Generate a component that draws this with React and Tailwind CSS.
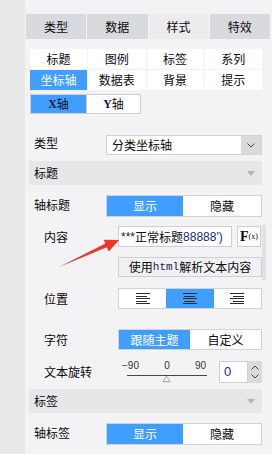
import React from "react";

const BLUE = "bg-[#409eff] text-white";

function AlignIcon({ type }) {
  const rows = [14, 11, 14, 11, 14];
  const ys = [0, 3, 5, 8, 10];
  return (
    <svg width="14" height="11" viewBox="0 0 14 11">
      {rows.map((w, i) => {
        const x = type === "left" ? 0 : type === "right" ? 14 - w : Math.floor((14 - w) / 2);
        return <rect key={i} x={x} y={ys[i]} width={w} height="1" fill="#2b2b2b" />;
      })}
    </svg>
  );
}

function SectionHeader({ title, className }) {
  return (
    <div className={`ml-[4px] mr-[10px] h-[24px] bg-[#e7e7e9] flex items-center justify-between pl-[5px] pr-[7px] ${className}`}>
      <span>{title}</span>
      <svg width="8" height="5" viewBox="0 0 8 5">
        <polygon points="0,0 8,0 4,5" fill="#b4b4b4" />
      </svg>
    </div>
  );
}

function ShowHide({ label, className }) {
  return (
    <div className={`flex items-start pl-[9px] mr-[10px] ${className}`}>
      <div className="w-[72px] pt-[3px] leading-[14px]">{label}</div>
      <div className="flex-1 h-[22px] flex border border-[#d3d3d3] bg-white">
        <div className={`w-[76px] flex items-center justify-center ${BLUE}`}>显示</div>
        <div className="flex-1 flex items-center justify-center">隐藏</div>
      </div>
    </div>
  );
}

export default function App() {
  const tabs = ["类型", "数据", "样式", "特效"];
  const subTabs = ["标题", "图例", "标签", "系列", "坐标轴", "数据表", "背景", "提示"];

  return (
    <div className="flex w-[272px] h-[454px] overflow-hidden text-[12px] text-[#0a0a0a] font-['Noto_Sans_CJK_SC',sans-serif]">
      <div className="w-[26px] bg-[#e8e8e8]" />
      <div className="flex-1 bg-[#f3f3f5] relative">
        {/* top tabs */}
        <div className="mt-[14px] ml-px mr-[2px] h-[25px] grid grid-cols-4 gap-px bg-[#f6f6f8]">
          {tabs.map((t) => (
            <div
              key={t}
              className={`flex items-center justify-center ${t === "样式" ? "bg-[#ececef]" : "bg-[#d9dadd]"}`}
            >
              {t}
            </div>
          ))}
        </div>

        {/* sub tabs */}
        <div className="mt-[10px] ml-[5px] mr-[10px] grid grid-cols-4 gap-px">
          {subTabs.map((t) => (
            <div
              key={t}
              className={`h-[20px] flex items-center justify-center ${t === "坐标轴" ? BLUE : "bg-white"}`}
            >
              {t}
            </div>
          ))}
        </div>

        {/* X / Y axis */}
        <div className="mt-[4px] ml-[5px] w-[111px] h-[20px] flex border border-[#cfcfd2] bg-white">
          <div className="w-[55px] bg-[#409eff] flex items-center justify-center">
            <span className="font-['Liberation_Serif',serif] font-bold text-[12px] text-[#101a40]">X</span>
            <span className="text-[#111]">轴</span>
          </div>
          <div className="flex-1 border-l border-[#cfcfd2] flex items-center justify-center">
            <span className="font-['Liberation_Serif',serif] font-bold text-[12px] text-[#2a1050]">Y</span>
            <span>轴</span>
          </div>
        </div>

        {/* 类型 */}
        <div className="mt-[21px] flex items-start pl-[9px] mr-[10px]">
          <div className="w-[72px] pt-[1px] leading-[14px]">类型</div>
          <div className="flex-1 h-[20px] flex border border-[#d3d3d3] bg-white">
            <div className="flex-1 pl-[5px] flex items-center">分类坐标轴</div>
            <div className="w-[20px] bg-[#dadadd] flex items-center justify-center">
              <svg width="8" height="5" viewBox="0 0 8 5">
                <polyline points="0.5,0.5 4,4 7.5,0.5" fill="none" stroke="#444" strokeWidth="1" />
              </svg>
            </div>
          </div>
        </div>

        <SectionHeader title="标题" className="mt-[6px]" />

        <ShowHide label="轴标题" className="mt-[10px]" />

        {/* 内容 + html */}
        <div className="mt-[8px] mr-[6px] border-r-[4px] border-[#e2e2e4] pt-px pb-[3px]">
          <div className="flex items-center pl-[19px]">
            <div className="w-[74px]">内容</div>
            <div className="w-[114px] h-[21px] border border-[#cfcfd2] bg-white flex items-center pl-[2px] overflow-hidden whitespace-nowrap">
              <span className="font-['Liberation_Sans',sans-serif] text-[#222]">***</span>
              <span>正常标题</span>
              <span className="font-['Liberation_Sans',sans-serif] text-[#1b2a80]">88888')</span>
            </div>
            <div className="ml-[5px] w-[24px] h-[21px] border border-[#cfcfd2] bg-white flex items-center justify-center">
              <span className="font-['Liberation_Serif',serif] font-bold text-[14px] leading-none">F</span>
              <span className="font-['Liberation_Serif',serif] text-[8px] leading-none">(x)</span>
            </div>
          </div>
          <div className="mt-[10px] ml-[93px] h-[20px] border border-[#cfcfd2] bg-[#f1f1f3] flex items-center justify-center">
            使用<span className="font-['Liberation_Mono',monospace] text-[11px] text-[#102060]">html</span>解析文本内容
          </div>
        </div>

        {/* 位置 */}
        <div className="mt-[8px] flex items-center pl-[19px] mr-[10px]">
          <div className="w-[74px]">位置</div>
          <div className="flex-1 h-[21px] flex border border-[#d3d3d3] bg-white">
            <div className="flex-1 flex items-center justify-center">
              <AlignIcon type="left" />
            </div>
            <div className="flex-1 flex items-center justify-center bg-[#409eff]">
              <AlignIcon type="center" />
            </div>
            <div className="flex-1 flex items-center justify-center">
              <AlignIcon type="right" />
            </div>
          </div>
        </div>

        {/* 字符 */}
        <div className="mt-[20px] flex items-center pl-[19px] mr-[10px]">
          <div className="w-[74px]">字符</div>
          <div className="flex-1 h-[21px] flex border border-[#d3d3d3] bg-white">
            <div className={`w-[71px] flex items-center justify-center ${BLUE}`}>跟随主题</div>
            <div className="flex-1 flex items-center justify-center">自定义</div>
          </div>
        </div>

        {/* 文本旋转 */}
        <div className="mt-[11px] flex items-center pl-[19px] mr-[10px]">
          <div className="w-[78px]">文本旋转</div>
          <div className="w-[90px] h-[22px] flex flex-col">
            <div className="flex justify-between pr-[6px] font-['Liberation_Sans',sans-serif] text-[10px] leading-[10px] text-[#333]">
              <span>−90</span>
              <span>0</span>
              <span>90</span>
            </div>
            <svg width="90" height="9" viewBox="0 0 90 9" className="mt-[4px]">
              <rect x="0" y="0" width="90" height="1" fill="#333" />
              <polygon points="44.5,1.5 48.5,7.5 40.5,7.5" fill="#fff" stroke="#999" strokeWidth="1" />
            </svg>
          </div>
          <div className="ml-[7px] w-[29px] h-[22px] border border-[#cfcfd2] bg-white flex items-center pl-[4px] text-[13px] font-['Liberation_Sans',sans-serif] text-[#1b2a80]">
            0
          </div>
          <div className="w-[14px] h-[22px] bg-[#dadadd] flex flex-col items-center justify-center gap-[4px]">
            <svg width="8" height="5" viewBox="0 0 8 5">
              <polyline points="0.5,4.5 4,1 7.5,4.5" fill="none" stroke="#444" strokeWidth="1" />
            </svg>
            <svg width="8" height="5" viewBox="0 0 8 5">
              <polyline points="0.5,0.5 4,4 7.5,0.5" fill="none" stroke="#444" strokeWidth="1" />
            </svg>
          </div>
        </div>

        <SectionHeader title="标签" className="mt-[6px]" />

        <ShowHide label="轴标签" className="mt-[10px]" />

        {/* red annotation arrow */}
        <svg
          className="absolute left-0 top-0 pointer-events-none"
          width="246"
          height="454"
          viewBox="26 0 246 454"
        >
          <polygon
            points="60,267 106.4,243.6 104.6,239.8 120,240 109.8,251.4 107.8,247.2"
            fill="#f03428"
          />
        </svg>
      </div>
    </div>
  );
}
